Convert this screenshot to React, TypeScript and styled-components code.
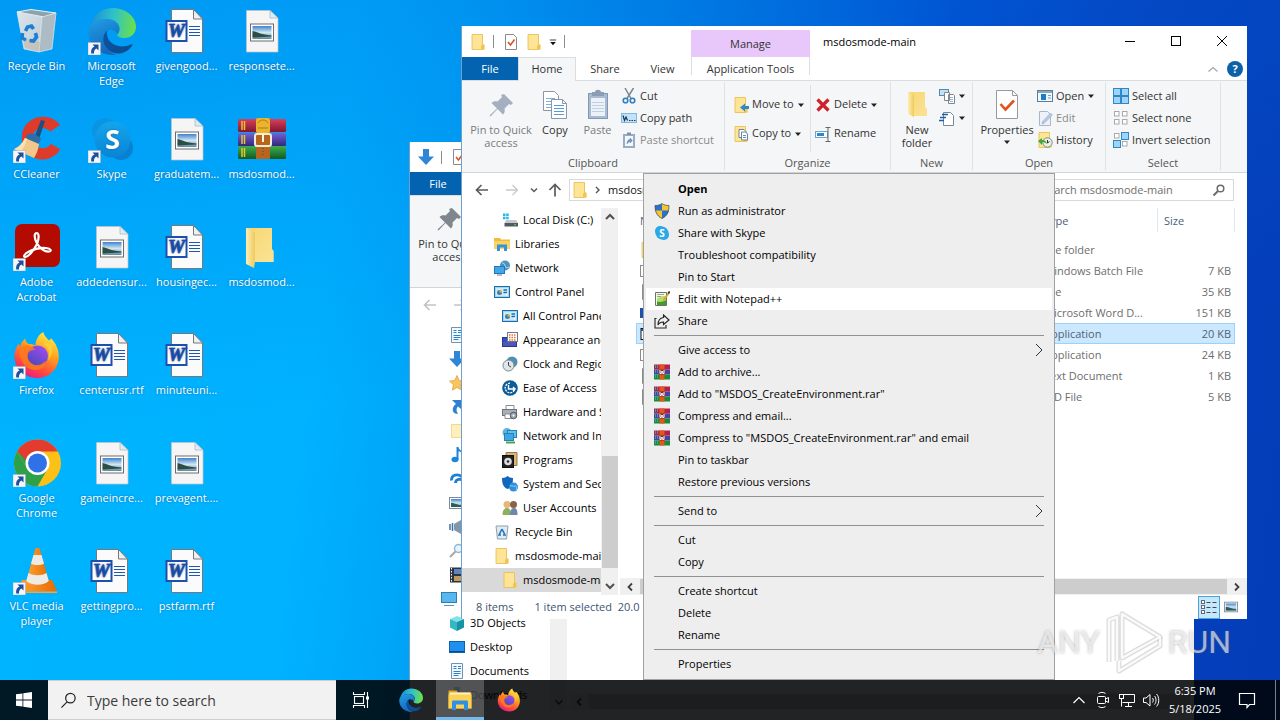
import React from "react";
import styled, { createGlobalStyle, css } from "styled-components";

const font = `"Open Sans", "Noto Sans", "Liberation Sans", sans-serif`;

const GlobalStyle = createGlobalStyle`
  *, *::before, *::after { box-sizing: border-box; }
  html, body { margin: 0; padding: 0; }
  body { font-family: ${font}; font-size: 11px; line-height: 15px; color: #000; overflow: hidden; }
  button, input { font: inherit; color: inherit; margin: 0; padding: 0; border: 0; background: none; }
  button { cursor: default; white-space: nowrap; }
  svg { display: block; flex: none; }
`;

/* ---------- icons ---------- */

const HiddenSvg = styled.svg`
  position: absolute;
  width: 0;
  height: 0;
`;

const Defs = () => (
  <HiddenSvg aria-hidden="true">
    <defs>
      <linearGradient id="edgeTop" x1="0" y1="0.3" x2="1" y2="0.4">
        <stop offset="0" stopColor="#1c8fd6" />
        <stop offset="0.5" stopColor="#2fc2c9" />
        <stop offset="1" stopColor="#6be04a" />
      </linearGradient>
      <linearGradient id="edgeMid" x1="0" y1="0" x2="0.4" y2="1">
        <stop offset="0" stopColor="#1fa0e4" />
        <stop offset="1" stopColor="#1566c0" />
      </linearGradient>
      <linearGradient id="edgeLow" x1="0" y1="0" x2="1" y2="1">
        <stop offset="0" stopColor="#0a56a4" />
        <stop offset="1" stopColor="#0e4a8c" />
      </linearGradient>
      <linearGradient id="foxBody" x1="0.8" y1="0" x2="0.3" y2="1">
        <stop offset="0" stopColor="#fff24a" />
        <stop offset="0.4" stopColor="#ffa21f" />
        <stop offset="0.75" stopColor="#ff4a3c" />
        <stop offset="1" stopColor="#e8188b" />
      </linearGradient>
      <linearGradient id="foxCore" x1="0.8" y1="0" x2="0.2" y2="1">
        <stop offset="0" stopColor="#a04bf2" />
        <stop offset="1" stopColor="#4a49b8" />
      </linearGradient>
      <linearGradient id="skypeBlue" x1="0" y1="0" x2="0" y2="1">
        <stop offset="0" stopColor="#12a6ec" />
        <stop offset="1" stopColor="#0a84d6" />
      </linearGradient>
      <linearGradient id="folderFill" x1="0" y1="0" x2="1" y2="1">
        <stop offset="0" stopColor="#f7d774" />
        <stop offset="1" stopColor="#fbe395" />
      </linearGradient>
      <linearGradient id="folderFlap" x1="0" y1="0" x2="1" y2="0">
        <stop offset="0" stopColor="#fdeeb4" />
        <stop offset="1" stopColor="#f0c95f" />
      </linearGradient>
      <linearGradient id="photoSky" x1="0" y1="0" x2="0" y2="1">
        <stop offset="0" stopColor="#3d82cf" />
        <stop offset="0.5" stopColor="#cfe6f2" />
        <stop offset="1" stopColor="#5d88a0" />
      </linearGradient>
      <linearGradient id="binGlass" x1="0" y1="0" x2="1" y2="1">
        <stop offset="0" stopColor="#dbe6eb" />
        <stop offset="1" stopColor="#bccad2" />
      </linearGradient>
      <linearGradient id="bookRed" x1="0" y1="0" x2="0" y2="1">
        <stop offset="0" stopColor="#d8405c" />
        <stop offset="1" stopColor="#84162f" />
      </linearGradient>
      <linearGradient id="bookBlue" x1="0" y1="0" x2="0" y2="1">
        <stop offset="0" stopColor="#7462d0" />
        <stop offset="1" stopColor="#33267e" />
      </linearGradient>
      <linearGradient id="bookGreen" x1="0" y1="0" x2="0" y2="1">
        <stop offset="0" stopColor="#3fae4a" />
        <stop offset="1" stopColor="#0d5a24" />
      </linearGradient>
      <linearGradient id="vlcOrange" x1="0" y1="0" x2="1" y2="0">
        <stop offset="0" stopColor="#ffa335" />
        <stop offset="1" stopColor="#e86c00" />
      </linearGradient>
    </defs>
  </HiddenSvg>
);

const shortcut = (
  <g>
    <rect x="0" y="35.500" width="12.500" height="12.500" fill="#f4f6f9" stroke="#a5a9ae" strokeWidth="0.500" />
    <path d="M4.500 37.500h6v6l-2-2c-2 1-2.700 2.500-2.500 5H3.200c-.5-3.500.8-6 3.300-7z" fill="#1d4f9c" />
  </g>
);

const checkPage = (
  <g>
    <path d="M2.500.5h8l3 3v12h-11z" fill="#fff" stroke="#8a8a8a" />
    <path d="M5 8l2.500 3L11.500 5.500" fill="none" stroke="#d6542a" strokeWidth="1.600" />
  </g>
);

const smallFolder = (
  <g>
    <path d="M2 0.500h11v10l1.500 1v4H2z" fill="#fbdf86" />
    <path d="M2 0.500h10.500v15H2z" fill="#fde595" stroke="#e6bd4c" strokeWidth="0.800" />
    <path d="M12 10.500h2.500v5H11v-3z" fill="#f0c450" />
  </g>
);

const smallWinrar = (
  <g>
    <rect x="0" y="0.500" width="16" height="5" fill="#b5204b" />
    <rect x="0" y="5.500" width="16" height="5" fill="#4c3fa6" />
    <rect x="0" y="10.500" width="16" height="5" fill="#1a8a3a" />
    <path d="M1.500 1v14M3.500 1v14" stroke="#2fb7a8" strokeWidth="0.800" strokeDasharray="3 2" />
    <rect x="5.500" y="0.500" width="5" height="15" fill="#e2571b" />
    <path d="M5.500 5.500h5v5h-5z" fill="#7b2a1c" />
    <path d="M6 6v3.500h1.300V7.500h1.400v2h1.300V6" fill="none" stroke="#fff" />
  </g>
);

const controlPanel = (
  <g>
    <rect x="0.500" y="2.500" width="15" height="11" fill="#9fd3f4" stroke="#1e6fa8" />
    <rect x="2" y="4" width="12" height="8" fill="#cdeafb" />
    <circle cx="5.500" cy="8.500" r="2.500" fill="#3f7fa6" />
    <path d="M5.500 8.500V6a2.500 2.500 0 0 1 2.500 2.500z" fill="#f3b43c" />
    <path d="M9.500 6h3.500M9.500 8.500h3.500" stroke="#1f6fb0" strokeWidth="1.500" />
    <circle cx="12.500" cy="10.500" r="1" fill="#fff" />
  </g>
);

const wordPage = (
  <g>
    <path d="M8.500 2.500h22l9 9.500v33.500h-31z" fill="#fbfbfb" stroke="#75797d" />
    <path d="M30.500 2.500V12h9z" fill="#eef0f2" stroke="#75797d" />
    <rect x="3.500" y="14" width="20" height="20" fill="#fff" stroke="#1d50ae" strokeWidth="2" />
    <text x="13.500" y="30" textAnchor="middle" fontFamily="Liberation Serif, serif" fontWeight="700" fontStyle="italic" fontSize="19" fill="#1d50ae" stroke="#1d50ae" strokeWidth="0.700">W</text>
    <path d="M26 19.500h11M26 22.500h11M26 25.500h11M26 28.500h11" stroke="#2057b0" />
  </g>
);

const photoPage = (
  <g>
    <path d="M8.500 3.500H32l8 7.500v34H8.500z" fill="#f6f5f5" stroke="#c5c2c4" strokeWidth="0.700" />
    <path d="M32 3.500V11h8z" fill="#dcebf5" stroke="#a9b4bd" strokeWidth="0.700" />
    <rect x="12.500" y="17" width="23" height="17" fill="#fff" stroke="#6f6a6c" />
    <rect x="14.500" y="19" width="19" height="13" fill="url(#photoSky)" />
    <path d="M14.500 24c5 1 7 3.500 19 4.500v1l-19 1z" fill="#2b4d42" />
  </g>
);

const firefox = (
  <g>
    <path d="M30.500 1c.5 4 3.500 6 5.500 8.500 1.300-.3 1.800-1.500 1.800-2.500 4.500 4.500 8 11 8 18C46 37.500 36.500 47 24.500 47S1.500 38 1.500 25.500c0-6 2-10 4.500-13 .2 1.500.8 2.500 1.300 3C8 12.500 9 10 12.300 7.500c.2 2.500 1.200 4 3.200 5.500 2.500-.3 5 .2 7 1.500C22.500 8.500 26 3 30.500 1z" fill="url(#foxBody)" />
    <circle cx="24.500" cy="25" r="10.500" fill="url(#foxCore)" />
    <path d="M6 17c6-4 12-3 16.500 1.500-3 .5-6 .8-7.500 4-1.300 4 1 9 5.500 11 5 1.500 10-.5 12-4 .5 6-5 10-11 9.500C12 38 6 30 6 17z" fill="#ff7a1c" opacity="0.850" />
    <path d="M30 12c6 4 7.500 11 5 18 4-4 5.500-11 3-17z" fill="#ffd23a" opacity="0.800" />
  </g>
);

const edge = (
  <g>
    <path d="M2.500 22C3.500 9.500 12.500 1 24.500 1 38 1 48 10 48 19.500c0 7-5 11.500-11.500 11.500-6 0-8-2.500-7-4 1-1.300 2-3 2-5.500C31.500 16 26 12 19 12S4.500 15.500 2.500 22z" fill="url(#edgeTop)" />
    <path d="M.5 25C.5 17.500 8 12 17.500 12c8.500 0 14 5 14 10 0 2.800-1.200 4-2 5.200-2-4-6.500-5.700-10-3.700-4.500 2.700-6 10-2 16 2.500 4 6.500 7 10.500 8.300C13 49.500.5 39 .5 25z" fill="url(#edgeMid)" />
    <path d="M19.500 23.500c-4.500 3-6 10-2 16 5.500 8.500 18 10.500 26.500-.5 1-1.500 0-2-1-1.500-9 4.500-21 1-23.500-7.500-.8-2.500-.6-5 0-6.500z" fill="url(#edgeLow)" />
  </g>
);

const explorer = (
  <g>
    <path d="M1 5h16l3 4h27v32H1z" fill="#e8a317" />
    <path d="M3 9h42v5H3z" fill="#fff2c2" />
    <path d="M1 13h46v28H1z" fill="#fbd257" />
    <path d="M8 44V28c0-2 1-3 3-3h26c2 0 3 1 3 3v16h-8V33H16v11z" fill="#2f8fe0" />
  </g>
);

const glyphs: Record<string, [number, React.ReactNode]> = {
  bin: [48, (
    <g>
      <path d="M4 5L18 2.500 43 6l-12 4z" fill="#8fa3ae" stroke="#eef4f7" />
      <path d="M4 5l25 5-3 35-15-3z" fill="url(#binGlass)" stroke="#dfe8ec" strokeWidth="0.700" />
      <path d="M29 10l14-4-4 36-13 3z" fill="#adbcc4" stroke="#dfe8ec" strokeWidth="0.700" />
      <path d="M9.500 31l17.500 4-1 9-14-3z" fill="#c9b3a0" opacity="0.500" />
      <path d="M12.500 24l2-4 4-1 2 3M9.500 26l-.5 5 4 2M16.500 33.500l4 .5 3-4-1-4" fill="none" stroke="#1a7fd6" strokeWidth="3.600" />
    </g>
  )],
  edgeLink: [48, <g>{edge}{shortcut}</g>],
  edge: [48, edge],
  word: [48, wordPage],
  photo: [48, photoPage],
  ccleaner: [48, (
    <g>
      <path d="M47 10C41 2 30-.5 20 4 9 9.500 7 22 10 31c4 12 18 17 29 11 4-2 7-5 8-8l-9-5c-4 5-11 6-15 1-4-4.500-4-12 1-15.500 4.500-3 10-1 13.500 2z" fill="#df3b2a" />
      <path d="M28 5l4 1-6 18-5-1z" fill="#1f4f80" />
      <path d="M14 20c4-3 10-1 14 4l-3 6-13-6z" fill="#2f6da8" />
      <path d="M12 23l14 6c-1 6-2 9-5 14L1 34c5-2 8-5 11-11z" fill="#f1c78a" />
      <path d="M12 23l2 .8C12 31 10 34 7 37l-6-3c5-2 8-5 11-11z" fill="#fbe0b4" />
      {shortcut}
    </g>
  )],
  skypeLink: [48, (
    <g>
      <circle cx="17" cy="16" r="13" fill="#0a95e2" />
      <circle cx="33" cy="33" r="12" fill="#0a80d2" />
      <circle cx="24.500" cy="24.500" r="18" fill="url(#skypeBlue)" />
      <text x="24.500" y="34" textAnchor="middle" fontFamily="Open Sans, sans-serif" fontWeight="700" fontSize="27" fill="#fff">S</text>
      {shortcut}
    </g>
  )],
  winrar: [48, (
    <g>
      <rect x="0" y="4" width="48" height="13" rx="1.500" fill="url(#bookRed)" />
      <rect x="0" y="18" width="48" height="13" rx="1.500" fill="url(#bookBlue)" />
      <rect x="0" y="31" width="48" height="13" rx="1.500" fill="url(#bookGreen)" />
      <path d="M4 6v9M6.500 6v9M4 20v9M6.500 20v9M4 33v9M6.500 33v9" stroke="#e8c52c" strokeWidth="1.500" />
      <rect x="18" y="3" width="14" height="41" fill="#b5651d" />
      <rect x="18" y="3" width="14" height="15" rx="2" fill="#e9b52e" />
      <path d="M20 8c2-4 8-4 10 0M20 13h10" fill="none" stroke="#b37a12" />
      <rect x="17" y="19" width="16" height="12" rx="2" fill="none" stroke="#f3ecd8" strokeWidth="2" />
      <path d="M25 18v9" stroke="#fff6d8" strokeWidth="2" />
      <path d="M25 33v9" stroke="#7c3f0c" strokeDasharray="1 2" />
    </g>
  )],
  acrobat: [48, (
    <g>
      <rect x="2" y="1" width="45" height="43" rx="7" fill="#b30b00" />
      <path d="M12 34c-2 0-1-3 4-5.500C21 26 28 24.500 33 25c5 .5 6 3 3 3.500-4 .5-9-3-12-8-3-5.500-3-10-.5-10.500 3 0 2.500 6 .5 11C21 27 15.500 34 12 34z" fill="none" stroke="#fff" strokeWidth="2.200" />
      {shortcut}
    </g>
  )],
  folder: [48, (
    <g>
      <path d="M8 5h26v21l1.700 2V39H14z" fill="url(#folderFill)" />
      <path d="M8 5l9 4v30l-1 6-8-4z" fill="url(#folderFlap)" />
    </g>
  )],
  firefoxLink: [48, <g>{firefox}{shortcut}</g>],
  firefox: [48, firefox],
  chromeLink: [48, (
    <g>
      <circle cx="24.500" cy="24" r="23.500" fill="#fbc116" />
      <path d="M4.100 12.300A23.500 23.500 0 0 0 24.500 47.500l10.200-17.700L24.500 24l-10.200 5.800z" fill="#2da04b" />
      <path d="M4.100 12.300l10.200 17.500L24.500 24z" fill="#2da04b" />
      <path d="M4.100 12.300A23.500 23.500 0 0 1 24.500.5c8.700 0 16 4.500 20.400 12H24.500l-11 9z" fill="#e33b2e" />
      <circle cx="24.500" cy="24" r="12" fill="#fff" />
      <circle cx="24.500" cy="24" r="9.500" fill="#2f72e8" />
      {shortcut}
    </g>
  )],
  vlc: [48, (
    <g>
      <path d="M9 33h30l5 11.500H5z" fill="url(#vlcOrange)" />
      <path d="M5 44.500h39V46H5z" fill="#f7a44a" />
      <path d="M22.500 1h4L36 35c-2 5-21 5-23 0z" fill="url(#vlcOrange)" />
      <path d="M20.500 8h8l2.500 8.500c-3 2-10 2-13 0zM15.500 26c5 3 13 3 18 0l2.300 8c-5 5-17 5-22.500 0z" fill="#eeeae6" />
      {shortcut}
    </g>
  )],
  explorer: [48, explorer],

  smallFolder: [16, smallFolder],
  checkPage: [16, checkPage],
  downArrow: [16, <path d="M5 0h6v7.500h5L8 16 0 7.500h5z" fill="#2f86d6" />],
  caretBar: [10, <g><path d="M1 2.500h8" stroke="#111" /><path d="M1.500 5h7L5 9z" fill="#111" /></g>],
  tinyCaret: [8, <path d="M1 2.500h6l-3 3.500z" fill="#222" />],
  pin: [32, <path d="M19 5l9 9-2 2-2-1-4.500 4.500c.5 3 0 4.500-1.500 6L12.500 20 6 27l-1.500.5L5 26l7-6.500L6.500 14c1.500-1.500 3-2 6-1.500L17 8l-1-2z" fill="currentColor" />],
  copyBig: [32, (
    <g>
      <path d="M4.500 2.500h11l4 4v15h-15z" fill="#fff" stroke="#8c97a3" />
      <path d="M7 9.500h9M7 12.500h9M7 15.500h9M7 18.500h9" stroke="#7fb0dc" />
      <path d="M12.500 10.500h11l4 4v15h-15z" fill="#fff" stroke="#8c97a3" />
      <path d="M23.500 10.500v4h4" fill="none" stroke="#8c97a3" />
      <path d="M15 16.500h10M15 19.500h10M15 22.500h10M15 25.500h10" stroke="#4f9be0" />
    </g>
  )],
  pasteBig: [32, (
    <g>
      <rect x="6.500" y="4.500" width="19" height="25" fill="#a9bbd1" stroke="#8298b8" />
      <rect x="9" y="9" width="14" height="18" fill="#edf2f9" />
      <path d="M10 13.500h12M10 16.500h12M10 19.500h12M10 22.500h12" stroke="#c1cfe2" />
      <path d="M10 3h3c0-3 6-3 6 0h3v4H10z" fill="#8b9db5" />
    </g>
  )],
  cut: [16, (
    <g fill="none">
      <path d="M4 0l6 10.500M12.500 0L6 10.500" stroke="#7b8791" strokeWidth="1.500" />
      <circle cx="4.500" cy="12.500" r="2.300" stroke="#2f7fc4" strokeWidth="1.600" />
      <circle cx="11.500" cy="12.500" r="2.300" stroke="#2f7fc4" strokeWidth="1.600" />
    </g>
  )],
  copyPath: [16, (
    <g>
      <rect x="0.500" y="3.500" width="15" height="9" fill="#c3e2f7" stroke="#84b7da" />
      <path d="M2 5.500l1.500 5L5 7l1.500 3.500" fill="none" stroke="#173b5e" strokeWidth="1.200" />
      <path d="M8 10.500h1.500M10.500 10.500H12M13 10.500h1.500" stroke="#173b5e" strokeWidth="1.200" />
    </g>
  )],
  pasteLink: [16, (
    <g>
      <rect x="2" y="2" width="12" height="14" fill="#9aacc4" />
      <rect x="4" y="4" width="8" height="10" fill="#f4f7fb" />
      <path d="M6 .500h4v2.500H6z" fill="#7f90aa" />
      <path d="M6 12c0-3 1-4.500 3-4.500V6l2.500 2.500L9 11V9.500" fill="#7c93b8" stroke="#7c93b8" strokeWidth="0.600" />
    </g>
  )],
  moveTo: [16, <g>{smallFolder}<path d="M16 9v3h-4v2.500L7 10.500l5-4V9z" fill="#2c88cf" /></g>],
  copyTo: [16, <g>{smallFolder}<path d="M6 3.500h5l2 2v6H6z" fill="#fff" stroke="#6d8299" /><path d="M8.500 6h4l2 2v6h-6z" fill="#fff" stroke="#6d8299" /><path d="M10 9.500h3M10 11.500h3" stroke="#4f93d8" /></g>],
  del: [16, <path d="M2.500 2.500l11 11M13.500 2.500l-11 11" stroke="#d0202a" strokeWidth="3.200" />],
  rename: [16, (
    <g>
      <rect x="0.500" y="5.500" width="12" height="6" fill="#fff" stroke="#6fa5cc" />
      <path d="M2 8.500h7" stroke="#2a86cf" strokeWidth="3" />
      <path d="M10.500 1.500h5M10.500 15.500h5M13 1.500v14" stroke="#666" fill="none" />
    </g>
  )],
  newFolder: [32, (
    <g>
      <path d="M7 3h17v15l2 1.500V27H12z" fill="url(#folderFill)" />
      <path d="M7 3l6 3v22l-6-3z" fill="url(#folderFlap)" />
    </g>
  )],
  newItem: [16, <g><rect x="0.500" y="1.500" width="9" height="6" fill="#bfe0f6" stroke="#5b87a8" /><path d="M5.500 4.500h5v8h-5zM9.500 6.500h5l1 1v8h-6z" fill="#fff" stroke="#7b8894" /><path d="M11 9.500h3M11 11.500h3M11 13.500h3" stroke="#9eb4c9" /></g>],
  easyAccess: [16, <g><path d="M4.500 2.500h7l3 3v10h-10z" fill="#fff" stroke="#7b8894" /><path d="M3 4.500h6M1 7.500h6M0 10.500h5" stroke="#1e5fa8" strokeWidth="1.500" /></g>],
  propsBig: [32, (
    <g>
      <path d="M5.500 1.500h16l5 5v23h-21z" fill="#fff" stroke="#9a9a9a" />
      <path d="M21.500 1.500v5h5" fill="none" stroke="#9a9a9a" />
      <path d="M9.500 15l5 5.500 8.500-9" fill="none" stroke="#e0521f" strokeWidth="2.600" />
    </g>
  )],
  open: [16, <g><rect x="0.500" y="2.500" width="15" height="11" fill="#eef7fd" stroke="#5f7d94" /><path d="M1 4h14" stroke="#8fa8b8" strokeWidth="2" /><rect x="4" y="6" width="5" height="6" fill="#1b7cc9" /><path d="M11 7.500h3M11 10h3" stroke="#7b9db5" /></g>],
  edit: [16, <g><path d="M2.500 1.500h8l3 3v11h-11z" fill="#eef3fa" stroke="#a9b6c8" /><path d="M15.500 5L7 13.500l-2 .5.500-2.500L13.500 3z" fill="#b8c9e2" stroke="#8fa5c5" strokeWidth="0.500" /></g>],
  history: [16, <g>{smallFolder}<circle cx="10.500" cy="10.500" r="4.700" fill="#e9efe9" stroke="#7c8a80" /><path d="M10.500 8v3l2-1.500" fill="none" stroke="#333" /><path d="M1 9l4-3v2c3 0 4 1 5 4-2-1.500-3-2-5-1.500V13z" fill="#3fa73b" /></g>],
  selAll: [16, <g fill="#9fd3f7" stroke="#2e87c8"><rect x="0.500" y="0.500" width="7" height="7" /><rect x="8.500" y="0.500" width="7" height="7" /><rect x="0.500" y="8.500" width="7" height="7" /><rect x="8.500" y="8.500" width="7" height="7" /></g>],
  selNone: [16, <g fill="#fff" stroke="#a9a9a9"><rect x="1.500" y="1.500" width="4.500" height="4.500" /><rect x="9.500" y="1.500" width="4.500" height="4.500" /><rect x="1.500" y="9.500" width="4.500" height="4.500" /><rect x="9.500" y="9.500" width="4.500" height="4.500" /></g>],
  selInvert: [16, <g><g fill="#fff" stroke="#a9a9a9"><rect x="1.500" y="1.500" width="4.500" height="4.500" /><rect x="9.500" y="9.500" width="4.500" height="4.500" /></g><g fill="#9fd3f7" stroke="#2e87c8"><rect x="8.500" y="0.500" width="7" height="7" /><rect x="0.500" y="8.500" width="7" height="7" /></g></g>],
  back: [16, <path d="M14 8H3M7.500 3L2.500 8l5 5" fill="none" stroke="currentColor" strokeWidth="1.700" />],
  forward: [16, <path d="M2 8h11M8.500 3l5 5-5 5" fill="none" stroke="currentColor" strokeWidth="1.300" />],
  up: [16, <path d="M8 14.500V3M2.500 8L8 2.500 13.500 8" fill="none" stroke="currentColor" strokeWidth="1.700" />],
  chevDown: [16, <path d="M4 6l4 4 4-4" fill="none" stroke="currentColor" strokeWidth="2" />],
  chevUp: [16, <path d="M4 10l4-4 4 4" fill="none" stroke="currentColor" strokeWidth="2" />],
  chevLeft: [16, <path d="M10 4.500L6.500 8l3.500 3.500" fill="none" stroke="currentColor" strokeWidth="1.800" />],
  chevRight: [16, <path d="M6 4.500L9.500 8 6 11.500" fill="none" stroke="currentColor" strokeWidth="1.800" />],
  crumb: [16, <path d="M6 5l3 3-3 3" fill="none" stroke="#555" strokeWidth="1.400" />],
  collapse: [16, <path d="M3.500 10.500l4.500-4 4.500 4" fill="none" stroke="#a5a5a5" strokeWidth="1.200" />],
  magnifier: [16, <g fill="none" stroke="#6b6b6b"><circle cx="9.500" cy="6.500" r="3.300" strokeWidth="1.500" /><path d="M7 9l-4.500 4.500" strokeWidth="2" /></g>],
  subMenu: [16, <path d="M6 2l6 6-6 6" fill="none" stroke="#333" />],
  minimize: [12, <path d="M1 6.500h10" stroke="#000" />],
  maximize: [12, <rect x="1.500" y="1.500" width="9" height="9" fill="none" stroke="#000" />],
  close: [12, <path d="M1 1l10 10M11 1L1 11" stroke="#000" />],

  disk: [16, <g><path d="M1 1.500h2.500v2.500H1zM4.200 1.500h2.500v2.500H4.200zM1 4.700h2.500v2.500H1zM4.200 4.700h2.500v2.500H4.200z" fill="#22b8e8" /><path d="M4 8h10l2 3H2.500z" fill="#c4c8cb" /><rect x="2.500" y="11" width="13.500" height="3.500" fill="#54595e" /><path d="M12 12.800h2" stroke="#4be36a" /></g>],
  libraries: [16, <g><path d="M0 2h6l1 1.500h9V13H0z" fill="#f2bb3d" /><path d="M0 5h16v8H0z" fill="#fad361" /><path d="M3 15V8.500h10V15h-3v-3.500H6V15z" fill="#3592dd" /></g>],
  network: [16, <g><circle cx="11" cy="5.500" r="5" fill="#4b93c4" /><path d="M8 3c2 0 3 1 3 3s2 2 4 1" stroke="#bfe0ef" fill="none" /><rect x="0.500" y="6.500" width="10" height="7" fill="#41a7e8" stroke="#2477b5" /><path d="M3 15h5" stroke="#6b7f8d" /></g>],
  control: [16, controlPanel],
  appearance: [16, <g><rect x="0.500" y="5.500" width="14" height="9" fill="#2b50c8" stroke="#27388a" /><path d="M1 10h13v4H1z" fill="#4f56b8" /><rect x="5.500" y="0.500" width="10" height="9" fill="#fff" stroke="#6f7690" /><path d="M7 3h7M7 5.500h7M7 8h7" stroke="#e07a35" strokeDasharray="1.500 1" strokeWidth="1.500" /></g>],
  clock: [16, <g><circle cx="10" cy="6" r="5.500" fill="#4f8fb0" /><circle cx="6.500" cy="9.500" r="5.500" fill="#dfe6e9" stroke="#7a878e" /><path d="M6.500 6v3.500l2.500 1.500" fill="none" stroke="#444" /></g>],
  ease: [16, <g><circle cx="8" cy="8" r="7.800" fill="#0f5b98" /><path d="M8 3.200a4.800 4.800 0 1 0 4.800 4.800" fill="none" stroke="#fff" strokeWidth="1.300" strokeDasharray="2 1" /><path d="M6.500 5v4h6M11 7l2 2-2 2" fill="none" stroke="#fff" strokeWidth="1.400" /></g>],
  hardware: [16, <g><path d="M4 1.500h8v5H4z" fill="#fff" stroke="#8a8f94" /><rect x="0.500" y="5.500" width="14" height="6" fill="#a9afb5" stroke="#6d7479" /><path d="M3 10h7v4.500H3z" fill="#fff" stroke="#8a8f94" /><circle cx="11.500" cy="11.500" r="3.300" fill="#9aa7b2" stroke="#556" /><circle cx="11.500" cy="11.500" r="1" fill="#fff" /></g>],
  netInternet: [16, <g><circle cx="5" cy="4.500" r="4.500" fill="#5eb3de" /><rect x="5.500" y="2.500" width="9" height="7" fill="#5bc0f0" stroke="#2a7fb5" /><rect x="2.500" y="5.500" width="9" height="7" fill="#3ca7e8" stroke="#2a7fb5" /><path d="M4 14.500h9" stroke="#4aa64a" strokeWidth="2" /></g>],
  programs: [16, <g><path d="M4 .500h11v13H4z" fill="#d9b77a" stroke="#9a7a44" /><rect x="0.500" y="3.500" width="11" height="12" fill="#222" stroke="#111" /><circle cx="6" cy="9.500" r="3.800" fill="#dcdcdc" /><circle cx="6" cy="9.500" r="1.200" fill="#222" /></g>],
  system: [16, <g><path d="M0 2c3 0 4-1 5.500-2C7 1 8 2 11 2c0 5-1 9-5.500 11C1 11 0 7 0 2z" fill="#1268b8" /><circle cx="11.500" cy="11" r="4.500" fill="#2f8fdc" /><path d="M8 10c2-1 3 1 5 0s2 2 1 4" fill="none" stroke="#8fd0f5" /></g>],
  users: [16, <g><circle cx="5" cy="4.500" r="3.500" fill="#e6b878" /><circle cx="11.500" cy="4.500" r="3.500" fill="#8a6248" /><path d="M.5 15c0-5 2-7 4.500-7s4 2 4 7z" fill="#8fae5f" /><path d="M8 15c0-5 1.500-7 4-7s3.500 2 3.500 7z" fill="#6f87a8" /></g>],
  recycleSmall: [16, <g><path d="M2 2h12l-1.500 13h-9z" fill="#e3eaee" stroke="#8fa0aa" /><path d="M8 5l-3 6h2M8 5l3 6H9" fill="none" stroke="#2079c8" strokeWidth="1.600" /></g>],

  docs: [16, <g><path d="M2.500.500h11v15h-11z" fill="#f3f8fc" stroke="#6f93b3" /><path d="M4.500 3.500h3M4.500 5.500h3M9 3.500h3M9 5.500h3M4.500 8.500h7M4.500 10.500h7M4.500 12.500h5" stroke="#2d83c9" /></g>],
  star: [16, <path d="M8 .5l2.300 5 5.200.6-4 3.600 1.200 5.500L8 12.400l-4.700 2.800 1.200-5.500-4-3.600 5.200-.6z" fill="#fbc55c" stroke="#e09a2c" strokeWidth="0.700" />],
  linkArrow: [16, <path d="M3 1h9v9L9 7.500C7 9 7 12 9 15c-4 0-6-3-5-6 .5-2 2-3.500 3-4z" fill="#2f80d3" />],
  paleFolder: [16, <path d="M2.500 1.500h10v13h-10z" fill="#fdf0bd" stroke="#f2d98d" />],
  music: [16, <g fill="#1a86dc"><ellipse cx="6" cy="12.500" rx="3.500" ry="2.700" /><path d="M7.500 0h2c0 3 4 3 4 7-1.500-2-2.500-2.500-4-2.500v8h-2z" /></g>],
  cloud: [16, <g fill="none" stroke="#1f7fd2" strokeWidth="2.800"><path d="M2.500 9.500C2 4 9 2 13.500 6" /><path d="M6.500 12c0-4 5-5 8.500-2" /></g>],
  pics: [16, <g><rect x="0.500" y="2.500" width="15" height="11" fill="#fff" stroke="#7b8b97" /><rect x="2" y="4" width="12" height="8" fill="url(#photoSky)" /><path d="M2 8c4 0 6 2 12 2.500V12H2z" fill="#2f5d55" /></g>],
  audio: [16, <g><path d="M5 5l7-4v14l-7-4z" fill="#7f96ab" /><path d="M1 5v6M3.500 4v8M13.500 2v12" stroke="#3f74a5" strokeWidth="1.500" /></g>],
  searchFolder: [16, <g fill="none"><circle cx="9.500" cy="5.500" r="4" stroke="#8db8d8" strokeWidth="1.500" fill="#e8f4fc" /><path d="M6.500 8.500L1 14" stroke="#a8a8a8" strokeWidth="2" /></g>],
  video: [16, <g><rect x="1" y="0.500" width="14" height="15" fill="#2d3440" /><path d="M2.500 1v14" stroke="#fff" strokeDasharray="1.500 1.500" /><rect x="5" y="2" width="8" height="5" fill="#5b87c0" /><rect x="5" y="9" width="8" height="5" fill="#c09a5b" /></g>],
  pc: [16, <g><rect x="0.500" y="1.500" width="15" height="10" fill="#59b7ee" stroke="#2b7fb9" /><path d="M3 14.500h10" stroke="#5d93b8" /></g>],
  cube: [16, <g><path d="M1 4l7-3 7 3-7 3z" fill="#7ee3e8" /><path d="M1 4l7 3v9l-7-3.500z" fill="#35b8c4" /><path d="M15 4L8 7v9l7-3.500z" fill="#1793a6" /></g>],
  desktop: [16, <g><rect x="0.500" y="2.500" width="15" height="11" fill="#2090ee" stroke="#0b62b0" /><path d="M1 12.500h14" stroke="#0a4a8c" /></g>],

  shield: [16, <g><path d="M8 .5C6 2 4 2.500 1 2.500 1 9 3 13 8 15.500z" fill="#2e6fc9" /><path d="M8 .5c2 1.500 4 2 7 2C15 9 13 13 8 15.500z" fill="#f4c52f" /><path d="M1.200 7.500H8v8C4 13.500 2 11 1.200 7.500z" fill="#f4c52f" /><path d="M14.800 7.500H8v8c4-2 6-4.500 6.800-8z" fill="#2e6fc9" /><path d="M8 .5c2 1.500 4 2 7 2C15 9 13 13 8 15.500 3 13 1 9 1 2.500c3 0 5-.5 7-2z" fill="none" stroke="#38465c" strokeWidth="0.700" /></g>],
  skypeSmall: [16, <g><circle cx="6" cy="6" r="5" fill="#2aa8e8" /><circle cx="10" cy="10" r="5" fill="#2aa8e8" /><circle cx="8" cy="8" r="6.500" fill="#2aa8e8" /><text x="8" y="12" textAnchor="middle" fontFamily="Open Sans, sans-serif" fontWeight="700" fontSize="10" fill="#fff">S</text></g>],
  notepad: [16, <g><path d="M1.500 1.500h11v13h-11z" fill="#f3f8ea" stroke="#6d7466" /><path d="M3 8c2-3 5-3 9-3v9H3z" fill="#b5dd6a" /><path d="M3 10.500c3 1 6 0 9-1V14H3z" fill="#3d9c2b" /><path d="M3 3.500h7M3 5.500h4" stroke="#9aa88c" /><path d="M15.500 1L9.500 9.500" stroke="#d9a033" strokeWidth="1.800" /><path d="M15.700.500l-1.500 2" stroke="#333" strokeWidth="1.800" /></g>],
  share: [16, <g fill="none" stroke="#222" strokeWidth="1.100"><path d="M2.500 5.500H1v9.500h11v-3" /><path d="M9.500 2l5.500 5-5.500 4.500V9C6.500 9 5 10 4 12c0-4 2-7 5.500-7.500z" /></g>],
  winrarSmall: [16, smallWinrar],

  detailsView: [18, <g><rect x="1.500" y="2.500" width="3" height="3" fill="#fff" stroke="#667" /><rect x="1.500" y="7.500" width="3" height="3" fill="#fff" stroke="#667" /><rect x="1.500" y="12.500" width="3" height="3" fill="#fff" stroke="#667" /><path d="M6.500 4.500h4M6.500 9.500h4M6.500 14.500h4M12.500 4.500h4M12.500 9.500h4M12.500 14.500h4" stroke="#445" /></g>],
  file: [16, <path d="M2.500.500h8l3 3v12h-11z" fill="#fff" stroke="#8b8b8b" />],
  batch: [16, <g><rect x="0.500" y="2.500" width="15" height="11" fill="#fff" stroke="#8b8b8b" /><circle cx="8" cy="8" r="3" fill="#a8c4d8" /></g>],
  app: [16, <g><rect x="1" y="2.500" width="14.500" height="11" fill="#fff" stroke="#111" /><path d="M1 4h15" stroke="#0b5cad" strokeWidth="2" /></g>],
  wordSmall: [16, <g><path d="M5.500.500h10v15h-10z" fill="#fff" stroke="#889" /><rect x="0" y="3" width="10" height="10" fill="#1d50ae" /></g>],

  start: [16, <path d="M0 2.300l6.500-.9v6.200H0zM7.300 1.300L16 0v7.600H7.300zM0 8.400h6.500v6.200L0 13.700zM7.300 8.400H16V16l-8.700-1.300z" fill="#fff" />],
  searchBar: [18, <g fill="none" stroke="#222" strokeWidth="1.300"><circle cx="11" cy="6.500" r="5" /><path d="M7.500 10.500L1.500 16.500" /></g>],
  taskView: [18, <g fill="none" stroke="#fff" strokeWidth="1.100"><rect x="2.500" y="5.500" width="9" height="7" /><path d="M1.500 1v2.500h11V1M1.500 17v-2.500h11V17M15.500 1v16" /><path d="M15.500 5.500v3" strokeWidth="3" /></g>],
  trayUp: [16, <path d="M2.500 11L8 5.500l5.500 5.500" fill="none" stroke="#fff" strokeWidth="1.200" />],
  meet: [18, <g fill="none" stroke="#fff"><rect x="3.500" y="5.500" width="8" height="7" rx="1" /><path d="M11.500 8l3-1.500v5l-3-1.500M4.500 2.500c2-1.500 5-1.500 7 0M4.500 15.500c2 1.500 5 1.500 7 0" /></g>],
  net: [18, <g fill="none" stroke="#fff"><path d="M5.500 3.500h11v8H4.500M10.500 11.500v3.500M7 15.500h7" /><rect x="1.500" y="3.500" width="4" height="4" /><path d="M3.500 7.500v8" /></g>],
  volume: [18, <g fill="none" stroke="#fff"><path d="M1.500 7v4.500h2.500L8 15V3.500L4 7zM10.500 7c1 1 1 3.500 0 4.500M12.500 5c2 2 2 6.500 0 8.500M14.500 3c3 3 3 9.500 0 12.500" /></g>],
  action: [18, <path d="M1.500 2.500h15v11h-5l-2.500 3v-3h-7.500z" fill="none" stroke="#fff" strokeWidth="1.200" />],
};

const Icon = ({ name, size = 16 }: { name: string; size?: number }) => {
  const [box, art] = glyphs[name];
  return (
    <svg width={size} height={size} viewBox={`0 0 ${box} ${box}`} aria-hidden="true">
      {art}
    </svg>
  );
};

/* ---------- desktop ---------- */

const Screen = styled.main`
  position: relative;
  height: 100vh;
  min-height: 480px;
  overflow: hidden;
  background:
    linear-gradient(172deg, rgba(0, 100, 220, 0.33) 0%, rgba(0, 120, 230, 0) 50%),
    linear-gradient(97deg, #00b4ff 0%, #00b2ff 26%, #00a6f8 34%, #0078e2 54%, #0050d0 70%, #0541be 84%, #043db8 100%);
`;

const IconGrid = styled.div`
  display: grid;
  grid-auto-flow: column;
  grid-template-rows: repeat(6, 108px);
  grid-auto-columns: 75px;
  justify-content: start;
`;

const DesktopItem = styled.button`
  display: flex;
  flex-direction: column;
  align-items: center;
  justify-content: flex-start;
  gap: 3px;
  padding: 7px 2px 0 0;
  color: #fff;
  white-space: normal;
  text-shadow: 0 0 2px rgba(0, 40, 90, 0.5);
`;

const desktopItems: [string, string][] = [
  ["bin", "Recycle Bin"], ["ccleaner", "CCleaner"], ["acrobat", "Adobe Acrobat"],
  ["firefoxLink", "Firefox"], ["chromeLink", "Google Chrome"], ["vlc", "VLC media player"],
  ["edgeLink", "Microsoft Edge"], ["skypeLink", "Skype"], ["photo", "addedensur..."],
  ["word", "centerusr.rtf"], ["photo", "gameincre..."], ["word", "gettingpro..."],
  ["word", "givengood..."], ["photo", "graduatem..."], ["word", "housingec..."],
  ["word", "minuteuni..."], ["photo", "prevagent...."], ["word", "pstfarm.rtf"],
  ["photo", "responsete..."], ["winrar", "msdosmod..."], ["folder", "msdosmod..."],
];

/* ---------- explorer window ---------- */

const Window = styled.section<{ $left: number; $top: number; $width: number; $height?: number }>`
  position: absolute;
  left: ${(p) => p.$left}px;
  top: ${(p) => p.$top}px;
  width: ${(p) => p.$width}px;
  ${(p) => (p.$height ? css`height: ${p.$height}px;` : css`bottom: 0;`)}
  display: flex;
  flex-direction: column;
  overflow: hidden;
  background: #fff;
  border-left: 1px solid #6f9fcb;
`;

const TitleBar = styled.header<{ $height: number }>`
  display: flex;
  flex: none;
  height: ${(p) => p.$height}px;
  padding-right: 2px;
`;

const QuickTools = styled.div`
  display: flex;
  align-items: center;
  gap: 7px;
  padding-left: 8px;
  width: 229px;
`;

const Rule = styled.span<{ $wide?: boolean }>`
  width: 1px;
  height: 13px;
  margin-right: ${(p) => (p.$wide ? 2 : 0)}px;
  background: #8d8d8d;
`;

const ContextTab = styled.div`
  width: 119px;
  margin-top: 4px;
  padding-top: 6px;
  text-align: center;
  background: #e8c8fa;
  color: #333;
`;

const WindowTitle = styled.h1`
  flex: 1;
  margin: 0;
  padding: 8px 13px;
  font-size: 11px;
  line-height: 15px;
  font-weight: 400;
`;

const Caption = styled.button`
  display: flex;
  align-items: center;
  justify-content: center;
  width: 46px;
  height: 30px;
`;

const Tabs = styled.nav`
  display: flex;
  flex: none;
  height: 24px;
  border-bottom: 1px solid #dcdddf;
  color: #333;
`;

const Tab = styled.button<{ $kind?: "file" | "active" | "context"; $width: number }>`
  width: ${(p) => p.$width}px;
  height: 24px;
  padding-bottom: 2px;
  ${(p) => p.$kind === "file" && css`background: #0463b1; color: #fff; height: 23px; padding-bottom: 0;`}
  ${(p) => p.$kind === "active" && css`background: #f5f6f7; border: 1px solid #dcdddf; border-bottom: 0;`}
  ${(p) => p.$kind === "context" && css`height: 18px; padding: 4px 0 0; border: 1px solid #dcdddf; border-width: 0 1px; overflow: visible;`}
`;

const TabsEnd = styled.div`
  display: flex;
  flex: 1;
  align-items: center;
  justify-content: flex-end;
  gap: 6px;
  padding-right: 4px;
`;

const Help = styled.button`
  width: 16px;
  height: 16px;
  border-radius: 8px;
  background: #0b62a8;
  color: #fff;
  font-weight: 700;
  line-height: 16px;
`;

const Ribbon = styled.div`
  display: flex;
  flex: none;
  height: 92px;
  background: #f5f6f7;
  border-bottom: 1px solid #d2d4d6;
  color: #333;
`;

const Group = styled.div<{ $width: number }>`
  display: grid;
  grid-template-rows: 73px 15px;
  width: ${(p) => p.$width}px;
  border-right: 1px solid #e0e1e3;
  margin-top: 1px;
  height: 88px;
`;

const GroupBody = styled.div`
  display: flex;
  align-items: flex-start;
  padding: 3px 0 0 4px;
`;

const GroupLabel = styled.div`
  text-align: center;
  color: #555;
`;

const Big = styled.button<{ $width: number; $muted?: boolean }>`
  display: flex;
  flex-direction: column;
  align-items: center;
  gap: 2px;
  width: ${(p) => p.$width}px;
  padding-top: 4px;
  line-height: 13px;
  white-space: normal;
  color: ${(p) => (p.$muted ? "#7b7b7b" : "#333")};
  svg { color: ${(p) => (p.$muted ? "#a4afbf" : "#7f868d")}; }
`;

const Column = styled.div<{ $pitch: number; $width?: number; $rule?: boolean }>`
  display: grid;
  align-content: start;
  grid-auto-rows: ${(p) => p.$pitch}px;
  ${(p) => p.$width && css`width: ${p.$width}px;`}
  ${(p) => p.$rule && css`border-right: 1px solid #dfe0e2;`}
`;

const OrganizeColumn = styled(Column)`
  padding: 5px 0 4px 4px;
`;

const SelectColumn = styled(Column)`
  padding-left: 3px;
`;

/* Labels beside an icon sit slightly above the icon's centre line. */
const Label = styled.span`
  padding-bottom: 2px;
`;

const Small = styled.button<{ $muted?: boolean }>`
  display: flex;
  align-items: center;
  gap: 3px;
  text-align: left;
  color: ${(p) => (p.$muted ? "#8a8a8a" : "#333")};
`;

const AddressRow = styled.div<{ $muted?: boolean }>`
  display: flex;
  flex: none;
  align-items: center;
  height: 35px;
  color: ${(p) => (p.$muted ? "#c4c4c4" : "#5b5b5b")};
  padding: 0 0 2px 12px;
`;

const NavButton = styled.button<{ $width: number; $faint?: boolean }>`
  width: ${(p) => p.$width}px;
  color: ${(p) => (p.$faint ? "#c9c9c9" : "inherit")};
`;

const AddressBox = styled.div`
  display: flex;
  flex: 1;
  align-items: center;
  gap: 2px;
  height: 22px;
  padding: 0 2px;
  border: 1px solid #d9d9d9;
  color: #111;
`;

const SearchBox = styled.label`
  display: flex;
  align-items: center;
  width: 201px;
  height: 22px;
  margin: 0 13px 0 12px;
  padding: 0 6px 0 8px;
  border: 1px solid #d9d9d9;
  input { flex: 1; min-width: 0; outline: 0; padding-bottom: 1px; }
  input::placeholder { color: #6d6d6d; opacity: 1; }
`;

const Body = styled.div`
  display: flex;
  flex: 1;
  min-height: 0;
`;

const Tree = styled.div<{ $width: number }>`
  flex: none;
  width: ${(p) => p.$width}px;
  overflow: hidden;
`;

const TreeItem = styled.button<{ $indent: number; $selected?: boolean }>`
  display: flex;
  align-items: center;
  gap: 5px;
  width: 100%;
  height: 24px;
  padding-left: ${(p) => p.$indent}px;
  overflow: hidden;
  background: ${(p) => (p.$selected ? "#d9d9d9" : "transparent")};
`;

const VScroll = styled.div`
  display: flex;
  flex-direction: column;
  flex: none;
  width: 17px;
  margin-right: 2px;
  background: #f0f0f0;
  color: #505050;
  align-items: center;
  padding: 1px 0;
`;

const VThumb = styled.div`
  width: 16px;
  height: 112px;
  margin-bottom: 10px;
  background: #cdcdcd;
`;

const Spacer = styled.div`
  flex: 1;
`;

const FilePane = styled.div`
  display: flex;
  flex: 1;
  flex-direction: column;
  min-width: 0;
`;

const FileArea = styled.div`
  flex: 1;
  padding: 0 12px 0 16px;
`;

const FileTable = styled.table`
  width: 100%;
  table-layout: fixed;
  border-collapse: separate;
  border-spacing: 0;
  color: #6d6d6d;
  th {
    height: 24px;
    padding: 0 4px;
    text-align: left;
    font-weight: 400;
    color: #4c607a;
    border-right: 1px solid #e0e8f0;
  }
  th:last-child { padding-left: 6px; }
  thead tr + tr th { height: 7px; border: 0; }
  td { height: 21px; padding: 0 4px; white-space: nowrap; overflow: hidden; }
  td:last-child { text-align: right; }
`;

const FileRow = styled.tr<{ $selected?: boolean }>`
  ${(p) => p.$selected && css`
    td { background: #cce8ff; border: 1px solid #99d1ff; border-width: 1px 0; color: #4f6474; }
    td:first-child { border-left-width: 1px; padding-left: 3px; }
    td:last-child { border-right-width: 1px; padding-right: 3px; }
  `}
`;

const HScroll = styled.div`
  display: flex;
  flex: none;
  align-items: center;
  height: 17px;
  padding: 0 2px;
  background: #f0f0f0;
  color: #404040;
`;

const HThumb = styled.div`
  flex: 1;
  height: 15px;
  margin: 0 2px 1px;
  background: #cdcdcd;
`;

const StatusBar = styled.footer`
  display: flex;
  flex: none;
  align-items: center;
  gap: 21px;
  height: 24px;
  padding: 0 5px 0 14px;
  color: #3c5473;
`;

const BackStatus = styled.footer`
  flex: none;
  height: 10px;
`;

const ViewButtons = styled.div`
  display: flex;
  margin-left: auto;
  align-items: center;
`;

const ViewButton = styled.button<{ $on?: boolean }>`
  display: flex;
  align-items: center;
  justify-content: center;
  width: 22px;
  height: 23px;
  ${(p) => p.$on && css`background: #c4e8fb; border: 1px solid #4ba3d8;`}
`;

const files: [string, string, string][] = [
  ["smallFolder", "File folder", ""],
  ["batch", "Windows Batch File", "7 KB"],
  ["file", "File", "35 KB"],
  ["wordSmall", "Microsoft Word D...", "151 KB"],
  ["app", "Application", "20 KB"],
  ["batch", "Application", "24 KB"],
  ["file", "Text Document", "1 KB"],
  ["file", "MD File", "5 KB"],
];

const treeItems: [string, string, number][] = [
  ["disk", "Local Disk (C:)", 40],
  ["libraries", "Libraries", 32],
  ["network", "Network", 32],
  ["control", "Control Panel", 32],
  ["control", "All Control Panel Items", 40],
  ["appearance", "Appearance and Personalization", 40],
  ["clock", "Clock and Region", 40],
  ["ease", "Ease of Access", 40],
  ["hardware", "Hardware and Sound", 40],
  ["netInternet", "Network and Internet", 40],
  ["programs", "Programs", 40],
  ["system", "System and Security", 40],
  ["users", "User Accounts", 40],
  ["recycleSmall", "Recycle Bin", 32],
  ["smallFolder", "msdosmode-main", 32],
  ["smallFolder", "msdosmode-main", 40],
];

const backTree: [string, string, number][] = [
  ["docs", "", 39], ["downArrow", "", 39], ["star", "", 39], ["linkArrow", "", 39],
  ["paleFolder", "", 39], ["music", "", 39], ["cloud", "", 39], ["pics", "", 39],
  ["audio", "", 39], ["searchFolder", "", 39], ["video", "", 39], ["pc", "", 31],
  ["cube", "3D Objects", 39], ["desktop", "Desktop", 39], ["docs", "Documents", 39],
  ["downArrow", "Downloads", 39],
];

const BackWindow = () => (
  <Window $left={409} $top={142} $width={785}>
    <TitleBar $height={30}>
      <QuickTools>
        <Icon name="downArrow" />
        <Rule $wide />
        <Icon name="checkPage" />
      </QuickTools>
    </TitleBar>
    <Tabs>
      <Tab $kind="file" $width={56}>File</Tab>
    </Tabs>
    <Ribbon>
      <GroupBody>
        <Big $width={70}>
          <Icon name="pin" size={32} />
          Pin to Quick access
        </Big>
      </GroupBody>
    </Ribbon>
    <AddressRow $muted>
      <NavButton $width={30} aria-label="Back"><Icon name="back" /></NavButton>
      <NavButton $width={30} aria-label="Forward"><Icon name="forward" /></NavButton>
    </AddressRow>
    <Body>
      <Tree $width={140}>
        {backTree.map(([icon, text, indent], i) => (
          <TreeItem key={i} $indent={indent}><Icon name={icon} /><Label>{text}</Label></TreeItem>
        ))}
      </Tree>
      <VScroll><Spacer /><Icon name="chevDown" size={14} /></VScroll>
      <FilePane>
        <Spacer />
        <HScroll><Icon name="chevLeft" /><HThumb /></HScroll>
      </FilePane>
    </Body>
    <BackStatus />
  </Window>
);

const FrontWindow = () => (
  <Window $left={461} $top={26} $width={786} $height={593}>
    <TitleBar $height={31}>
      <QuickTools>
        <Icon name="smallFolder" />
        <Rule $wide />
        <Icon name="checkPage" />
        <Icon name="smallFolder" />
        <Icon name="caretBar" size={8} />
        <Rule />
      </QuickTools>
      <ContextTab>Manage</ContextTab>
      <WindowTitle>msdosmode-main</WindowTitle>
      <Caption aria-label="Minimize"><Icon name="minimize" size={12} /></Caption>
      <Caption aria-label="Maximize"><Icon name="maximize" size={12} /></Caption>
      <Caption aria-label="Close"><Icon name="close" size={12} /></Caption>
    </TitleBar>
    <Tabs>
      <Tab $kind="file" $width={56}>File</Tab>
      <Tab $kind="active" $width={58}>Home</Tab>
      <Tab $width={58}>Share</Tab>
      <Tab $width={57}>View</Tab>
      <Tab $kind="context" $width={119}>Application Tools</Tab>
      <TabsEnd>
        <Icon name="collapse" />
        <Help aria-label="Help">?</Help>
      </TabsEnd>
    </Tabs>
    <Ribbon>
      <Group $width={263}>
        <GroupBody>
          <Big $width={70} $muted><Icon name="pin" size={32} />Pin to Quick access</Big>
          <Big $width={38}><Icon name="copyBig" size={32} />Copy</Big>
          <Big $width={47} $muted><Icon name="pasteBig" size={32} />Paste</Big>
          <Column $pitch={22}>
            <Small><Icon name="cut" /><Label>Cut</Label></Small>
            <Small><Icon name="copyPath" /><Label>Copy path</Label></Small>
            <Small $muted><Icon name="pasteLink" /><Label>Paste shortcut</Label></Small>
          </Column>
        </GroupBody>
        <GroupLabel>Clipboard</GroupLabel>
      </Group>
      <Group $width={166}>
        <GroupBody>
          <OrganizeColumn $pitch={29} $width={82} $rule>
            <Small><Icon name="moveTo" /><Label>Move to</Label><Icon name="tinyCaret" size={8} /></Small>
            <Small><Icon name="copyTo" /><Label>Copy to</Label><Icon name="tinyCaret" size={8} /></Small>
          </OrganizeColumn>
          <OrganizeColumn $pitch={29}>
            <Small><Icon name="del" /><Label>Delete</Label><Icon name="tinyCaret" size={8} /></Small>
            <Small><Icon name="rename" /><Label>Rename</Label></Small>
          </OrganizeColumn>
        </GroupBody>
        <GroupLabel>Organize</GroupLabel>
      </Group>
      <Group $width={82}>
        <GroupBody>
          <Big $width={44}><Icon name="newFolder" size={32} />New folder</Big>
          <Column $pitch={22}>
            <Small aria-label="New item"><Icon name="newItem" /><Icon name="tinyCaret" size={8} /></Small>
            <Small aria-label="Easy access"><Icon name="easyAccess" /><Icon name="tinyCaret" size={8} /></Small>
          </Column>
        </GroupBody>
        <GroupLabel>New</GroupLabel>
      </Group>
      <Group $width={133}>
        <GroupBody>
          <Big $width={60}><Icon name="propsBig" size={32} />Properties<Icon name="tinyCaret" size={8} /></Big>
          <Column $pitch={22}>
            <Small><Icon name="open" /><Label>Open</Label><Icon name="tinyCaret" size={8} /></Small>
            <Small $muted><Icon name="edit" /><Label>Edit</Label></Small>
            <Small><Icon name="history" /><Label>History</Label></Small>
          </Column>
        </GroupBody>
        <GroupLabel>Open</GroupLabel>
      </Group>
      <Group $width={115}>
        <GroupBody>
          <SelectColumn $pitch={22}>
            <Small><Icon name="selAll" /><Label>Select all</Label></Small>
            <Small><Icon name="selNone" /><Label>Select none</Label></Small>
            <Small><Icon name="selInvert" /><Label>Invert selection</Label></Small>
          </SelectColumn>
        </GroupBody>
        <GroupLabel>Select</GroupLabel>
      </Group>
    </Ribbon>
    <AddressRow>
      <NavButton $width={30} aria-label="Back"><Icon name="back" /></NavButton>
      <NavButton $width={24} $faint aria-label="Forward"><Icon name="forward" /></NavButton>
      <NavButton $width={19} aria-label="Recent locations"><Icon name="chevDown" size={12} /></NavButton>
      <NavButton $width={22} aria-label="Up"><Icon name="up" /></NavButton>
      <AddressBox>
        <Icon name="smallFolder" />
        <Icon name="crumb" />
        <span>msdosmode-main</span>
      </AddressBox>
      <SearchBox>
        <input aria-label="Search" placeholder="Search msdosmode-main" />
        <Icon name="magnifier" />
      </SearchBox>
    </AddressRow>
    <Body>
      <Tree $width={139}>
        {treeItems.map(([icon, text, indent], i) => (
          <TreeItem key={i} $indent={indent} $selected={i === treeItems.length - 1}>
            <Icon name={icon} /><Label>{text}</Label>
          </TreeItem>
        ))}
      </Tree>
      <VScroll>
        <Icon name="chevUp" />
        <Spacer />
        <VThumb />
        <Icon name="chevDown" />
      </VScroll>
      <FilePane>
        <FileArea>
          <FileTable>
            <colgroup>
              <col />
              <col width="118" />
              <col width="77" />
            </colgroup>
            <thead>
              <tr><th>Name</th><th>Type</th><th>Size</th></tr>
              <tr aria-hidden="true"><th colSpan={3} /></tr>
            </thead>
            <tbody>
              {files.map(([icon, type, size], i) => (
                <FileRow key={i} $selected={i === 4}>
                  <td><Icon name={icon} /></td>
                  <td>{type}</td>
                  <td>{size}</td>
                </FileRow>
              ))}
            </tbody>
          </FileTable>
        </FileArea>
        <HScroll><Icon name="chevLeft" /><HThumb /><Icon name="chevRight" /></HScroll>
      </FilePane>
    </Body>
    <StatusBar>
      <Label>8 items</Label>
      <Label>1 item selected&nbsp; 20.0 KB</Label>
      <ViewButtons>
        <ViewButton $on aria-label="Details view"><Icon name="detailsView" size={18} /></ViewButton>
        <ViewButton aria-label="Thumbnail view"><Icon name="pics" size={14} /></ViewButton>
      </ViewButtons>
    </StatusBar>
  </Window>
);

/* ---------- context menu ---------- */

const Menu = styled.div`
  position: absolute;
  left: 643px;
  top: 173px;
  width: 412px;
  padding: 4px 2px;
  background: #eee;
  border: 1px solid #a0a0a0;
`;

const MenuItem = styled.button<{ $hot?: boolean; $bold?: boolean }>`
  display: grid;
  grid-template-columns: 16px 1fr 16px;
  gap: 8px;
  align-items: center;
  width: 100%;
  height: 22px;
  padding: 0 6px 0 8px;
  text-align: left;
  font-weight: ${(p) => (p.$bold ? 700 : 400)};
  background: ${(p) => (p.$hot ? "#fff" : "transparent")};
  ${Label} { grid-column: 2; }
`;

const Separator = styled.hr`
  height: 1px;
  margin: 3px 8px;
  border: 0;
  background: #919191;
`;

type Entry = { text: string; icon?: string; sub?: boolean; hot?: boolean; bold?: boolean } | null;

const entries: Entry[] = [
  { text: "Open", bold: true },
  { text: "Run as administrator", icon: "shield" },
  { text: "Share with Skype", icon: "skypeSmall" },
  { text: "Troubleshoot compatibility" },
  { text: "Pin to Start" },
  { text: "Edit with Notepad++", icon: "notepad", hot: true },
  { text: "Share", icon: "share" },
  null,
  { text: "Give access to", sub: true },
  { text: "Add to archive...", icon: "winrarSmall" },
  { text: 'Add to "MSDOS_CreateEnvironment.rar"', icon: "winrarSmall" },
  { text: "Compress and email...", icon: "winrarSmall" },
  { text: 'Compress to "MSDOS_CreateEnvironment.rar" and email', icon: "winrarSmall" },
  { text: "Pin to taskbar" },
  { text: "Restore previous versions" },
  null,
  { text: "Send to", sub: true },
  null,
  { text: "Cut" },
  { text: "Copy" },
  null,
  { text: "Create shortcut" },
  { text: "Delete" },
  { text: "Rename" },
  null,
  { text: "Properties" },
];

/* ---------- watermark ---------- */

const Watermark = styled.div`
  position: absolute;
  right: 49px;
  bottom: 46px;
  display: flex;
  align-items: center;
  gap: 5px;
  font-family: Roboto, "Open Sans", sans-serif;
  font-size: 32px;
  line-height: 64px;
  color: rgba(255, 255, 255, 0.6);
  text-shadow: 0 0 3px rgba(90, 90, 90, 0.45);
  pointer-events: none;
`;

/* ---------- taskbar ---------- */

const Taskbar = styled.footer`
  position: absolute;
  left: 0;
  right: 0;
  bottom: 0;
  display: flex;
  height: 40px;
  background: rgba(0, 2, 3, 0.87);
  color: #fff;
`;

const TaskButton = styled.button<{ $width: number; $active?: boolean }>`
  display: flex;
  align-items: center;
  justify-content: center;
  width: ${(p) => p.$width}px;
  ${(p) => p.$active && css`background: rgba(255, 255, 255, 0.22); border-bottom: 3px solid #76b9ed; padding-top: 3px;`}
`;

const SearchField = styled.label`
  display: flex;
  align-items: center;
  gap: 10px;
  width: 288px;
  padding: 1px 0 0 12px;
  background: #f2f2f2;
  border: 1px solid #cfcfcf;
  border-width: 1px 0;
  input { flex: 1; min-width: 0; font-size: 14px; line-height: 20px; outline: 0; color: #333; }
  input::placeholder { color: #3b3b3b; opacity: 1; }
`;

const Clock = styled.time`
  display: flex;
  flex-direction: column;
  justify-content: center;
  width: 64px;
  text-align: center;
  line-height: 18px;
`;

const ShowDesktop = styled.button`
  width: 5px;
  margin-left: 8px;
  border-left: 1px solid #7d8084;
`;

export default function App() {
  return (
    <>
      <GlobalStyle />
      <Defs />
      <Screen>
        <IconGrid>
          {desktopItems.map(([icon, text], i) => (
            <DesktopItem key={i}>
              <Icon name={icon} size={48} />
              {text}
            </DesktopItem>
          ))}
        </IconGrid>
        <BackWindow />
        <FrontWindow />
        <Menu role="menu">
          {entries.map((e, i) =>
            e ? (
              <MenuItem key={i} role="menuitem" $hot={e.hot} $bold={e.bold}>
                {e.icon && <Icon name={e.icon} />}
                <Label>{e.text}</Label>
                {e.sub && <Icon name="subMenu" />}
              </MenuItem>
            ) : (
              <Separator key={i} />
            )
          )}
        </Menu>
        <Watermark>
          <span>ANY</span>
          <svg width="58" height="64" viewBox="0 0 58 64" fill="none" aria-hidden="true">
            <g stroke="#8a8a8a" strokeOpacity="0.3" strokeWidth="5" strokeLinejoin="round">
              <path d="M17 4v44l38-21z" />
              <path d="M4 52V10l8-3v44M14 51v10l41-25v-9" />
            </g>
            <g stroke="#fff" strokeOpacity="0.85" strokeWidth="2.500" strokeLinejoin="round">
              <path d="M17 4v44l38-21z" />
              <path d="M4 52V10l8-3v44M14 51v10l41-25v-9" />
            </g>
          </svg>
          <span>RUN</span>
        </Watermark>
        <Taskbar>
          <TaskButton $width={48} aria-label="Start"><Icon name="start" /></TaskButton>
          <SearchField>
            <Icon name="searchBar" size={17} />
            <input aria-label="Search the computer" placeholder="Type here to search" />
          </SearchField>
          <TaskButton $width={50} aria-label="Task View"><Icon name="taskView" size={18} /></TaskButton>
          <TaskButton $width={50} aria-label="Microsoft Edge"><Icon name="edge" size={24} /></TaskButton>
          <TaskButton $width={48} $active aria-label="File Explorer"><Icon name="explorer" size={24} /></TaskButton>
          <TaskButton $width={50} aria-label="Firefox"><Icon name="firefox" size={24} /></TaskButton>
          <Spacer />
          <TaskButton $width={24} aria-label="Hidden icons"><Icon name="trayUp" /></TaskButton>
          <TaskButton $width={24} aria-label="Meet Now"><Icon name="meet" size={18} /></TaskButton>
          <TaskButton $width={24} aria-label="Network"><Icon name="net" size={18} /></TaskButton>
          <TaskButton $width={24} aria-label="Volume"><Icon name="volume" size={18} /></TaskButton>
          <Clock><span>6:35 PM</span><span>5/18/2025</span></Clock>
          <TaskButton $width={40} aria-label="Notifications"><Icon name="action" size={18} /></TaskButton>
          <ShowDesktop aria-label="Show desktop" />
        </Taskbar>
      </Screen>
    </>
  );
}
